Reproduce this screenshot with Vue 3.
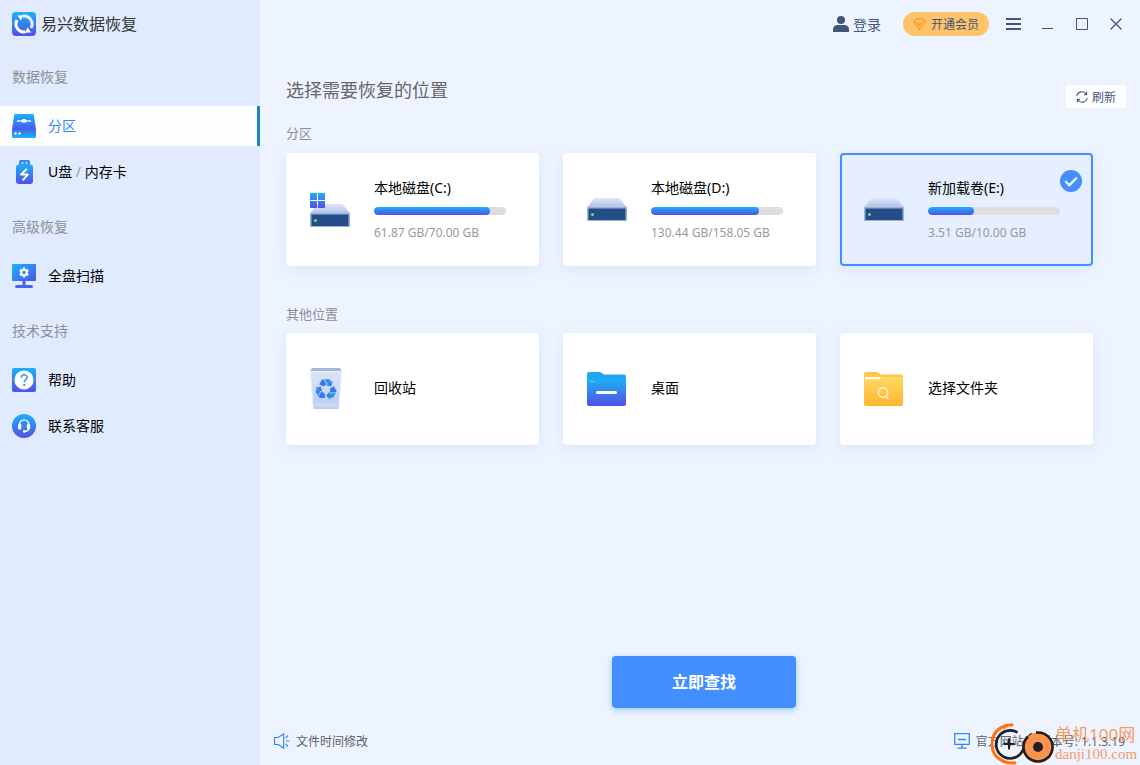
<script setup>
import { ref } from 'vue'

const sections = [
  {
    title: '数据恢复',
    items: [
      { id: 'partition', label: ['分区'] },
      { id: 'usb', label: ['U盘', '内存卡'] },
    ],
  },
  { title: '高级恢复', items: [{ id: 'scan', label: ['全盘扫描'] }] },
  {
    title: '技术支持',
    items: [
      { id: 'help', label: ['帮助'] },
      { id: 'service', label: ['联系客服'] },
    ],
  },
]

const disks = [
  { id: 'c', name: '本地磁盘(C:)', used: 61.87, total: 70, system: true },
  { id: 'd', name: '本地磁盘(D:)', used: 130.44, total: 158.05, system: false },
  { id: 'e', name: '新加载卷(E:)', used: 3.51, total: 10, system: false },
]

const places = [
  { id: 'bin', name: '回收站' },
  { id: 'desktop', name: '桌面' },
  { id: 'folder', name: '选择文件夹' },
]

const activeNav = ref('partition')
const selected = ref('e')
const percent = (d) => Math.floor((d.used / d.total) * 100)
</script>

<template>
  <div class="window">
    <svg class="defs" width="0" height="0" aria-hidden="true">
      <defs>
        <linearGradient id="blue" x1="0" y1="0" x2="0" y2="1">
          <stop offset="0" stop-color="#1cb0f8" />
          <stop offset="1" stop-color="#5350e6" />
        </linearGradient>
        <linearGradient id="blueDiag" x1="0" y1="0" x2="1" y2="1">
          <stop offset="0" stop-color="#14b8fb" />
          <stop offset="1" stop-color="#5350e6" />
        </linearGradient>
        <linearGradient id="drive" x1="0" y1="0" x2="0" y2="1">
          <stop offset="0" stop-color="#18b4fa" />
          <stop offset="0.64" stop-color="#4d5ae8" />
          <stop offset="0.66" stop-color="#3d70ec" />
          <stop offset="1" stop-color="#18b4fa" />
        </linearGradient>
        <linearGradient id="lid" x1="0" y1="0" x2="0" y2="1">
          <stop offset="0" stop-color="#dde6f8" />
          <stop offset="1" stop-color="#afc3e8" />
        </linearGradient>
        <linearGradient id="bin" x1="0" y1="0" x2="0" y2="1">
          <stop offset="0" stop-color="#dbe5f7" />
          <stop offset="1" stop-color="#b9ccee" />
        </linearGradient>
        <linearGradient id="yellow" x1="0" y1="0" x2="0" y2="1">
          <stop offset="0" stop-color="#ffd866" />
          <stop offset="1" stop-color="#ffb52e" />
        </linearGradient>
      </defs>
    </svg>

    <aside class="sidebar">
      <div class="brand">
        <svg width="24" height="24" viewBox="0 0 24 24" aria-hidden="true">
          <rect width="24" height="24" rx="4" fill="url(#blue)" />
          <path d="M10.500 4.200A8 8 0 0 1 19 16" fill="none" stroke="#e3ecff" stroke-width="3" />
          <path d="M13.500 19.800A8 8 0 0 1 5 8" fill="none" stroke="#fff" stroke-width="3" />
          <path d="M5.600 3.400 11.200 3.200 8.800 8.600Z" fill="#fff" />
          <path d="M19.200 20.400 13.200 20.800 15.600 15.200Z" fill="#fff" />
        </svg>
        <span>易兴数据恢复</span>
      </div>
      <nav>
        <section v-for="s in sections" :key="s.title">
          <h2>{{ s.title }}</h2>
          <button
            v-for="item in s.items"
            :key="item.id"
            type="button"
            class="nav-item"
            :class="{ active: activeNav === item.id }"
            @click="activeNav = item.id"
          >
            <svg v-if="item.id === 'partition'" width="24" height="24" viewBox="0 0 24 24" aria-hidden="true">
              <path d="M3.500 0h17a1.400 1.400 0 0 1 1.400 1.200L24 15.500V22.600A1.400 1.400 0 0 1 22.600 24H1.400A1.400 1.400 0 0 1 0 22.600V15.500L2.100 1.200A1.400 1.400 0 0 1 3.500 0Z" fill="url(#drive)" />
              <path d="M5 7h14" stroke="#fff" stroke-width="1.300" />
              <ellipse cx="12" cy="7" rx="2.500" ry="1.900" fill="#fff" />
              <circle cx="3.500" cy="19.500" r="1.200" fill="#fff" />
              <circle cx="7.500" cy="19.500" r="1.200" fill="#fff" />
            </svg>
            <svg v-else-if="item.id === 'usb'" width="24" height="24" viewBox="0 0 24 24" aria-hidden="true">
              <path d="M8.500 0h8A1.500 1.500 0 0 1 18 1.500V5H7V1.500A1.500 1.500 0 0 1 8.500 0Z" fill="#3d88f0" />
              <path d="M9.500 2.200h2v1.600h-2ZM13.500 2.200h2v1.600h-2Z" fill="#dcecff" />
              <rect x="4" y="4.500" width="17" height="19.500" rx="3" fill="url(#blue)" />
              <path d="M14.200 9.600 9 14.400H15.800L11.200 19.800" fill="none" stroke="#fff" stroke-width="2" stroke-linejoin="round" stroke-linecap="round" />
            </svg>
            <svg v-else-if="item.id === 'scan'" width="24" height="24" viewBox="0 0 24 24" aria-hidden="true">
              <rect width="24" height="17" rx="1" fill="url(#blueDiag)" />
              <path d="M10.500 17h3v4h6a1.500 1.500 0 0 1 0 3h-15a1.500 1.500 0 0 1 0-3h6Z" fill="#4a62e8" />
              <circle cx="12" cy="8.500" r="2.700" fill="none" stroke="#fff" stroke-width="2" />
              <path d="M12 3.600v2.200M12 11.200v2.200M7.800 6l1.900 1.100M14.300 9.900l1.900 1.100M7.800 11l1.900-1.100M14.300 7.100 16.200 6" stroke="#fff" stroke-width="2.400" />
            </svg>
            <svg v-else-if="item.id === 'help'" width="24" height="24" viewBox="0 0 24 24" aria-hidden="true">
              <rect width="24" height="24" rx="2" fill="url(#blue)" />
              <circle cx="12" cy="12" r="9.600" fill="#fff" />
              <path d="M9.300 9.700C9.300 5.900 15 5.900 15 9.400 15 11.600 12.200 11.600 12.200 14.400" fill="none" stroke="#2d9cf4" stroke-width="1.600" />
              <circle cx="12.200" cy="17" r="1.100" fill="#3c80ee" />
            </svg>
            <svg v-else width="24" height="24" viewBox="0 0 24 24" aria-hidden="true">
              <circle cx="12" cy="12" r="12" fill="url(#blue)" />
              <path d="M7.500 14V10.500a4.600 4.600 0 0 1 9.200 0V13.500C16.700 16.300 14.800 17.500 12.500 17.500" fill="none" stroke="#fff" stroke-width="1.400" />
              <rect x="6" y="9.700" width="3.300" height="5.800" rx="1.500" fill="#fff" />
              <rect x="14.900" y="9.700" width="3.300" height="5.800" rx="1.500" fill="#fff" />
              <circle cx="12.200" cy="17.400" r="1.300" fill="#fff" />
            </svg>
            <span>
              <template v-for="(part, i) in item.label" :key="part">
                <i v-if="i > 0"> / </i>{{ part }}
              </template>
            </span>
          </button>
        </section>
      </nav>
    </aside>

    <main class="main">
      <header class="topbar">
        <button type="button" class="login">
          <svg width="16" height="16" viewBox="0 0 16 16" aria-hidden="true">
            <circle cx="8" cy="4" r="4" fill="#42567a" />
            <path d="M0 16V13.500A4.500 4.500 0 0 1 4.500 9h7A4.500 4.500 0 0 1 16 13.500V16Z" fill="#42567a" />
          </svg>
          登录
        </button>
        <button type="button" class="vip">
          <svg width="13" height="12" viewBox="0 0 13 12" fill="none" stroke="#fa9a1c" stroke-width="1.200" stroke-linejoin="round" aria-hidden="true">
            <path d="M3.300.8h6.400L12.200 4.200 6.500 11.200.8 4.200ZM3.700 4.400 6.500 7.500 9.300 4.400" />
          </svg>
          开通会员
        </button>
        <button type="button" class="tool menu" aria-label="菜单">
          <svg width="15" height="12" viewBox="0 0 15 12"><path d="M0 1h15M0 6h15M0 11h15" stroke="#42567a" stroke-width="2" /></svg>
        </button>
        <button type="button" class="tool" aria-label="最小化">
          <svg width="12" height="12" viewBox="0 0 12 12"><path d="M0 10.500h11" stroke="#42567a" /></svg>
        </button>
        <button type="button" class="tool" aria-label="最大化">
          <svg width="12" height="12" viewBox="0 0 12 12"><path d="M.5.500h11v11H.5Z" fill="none" stroke="#42567a" /></svg>
        </button>
        <button type="button" class="tool" aria-label="关闭">
          <svg width="12" height="12" viewBox="0 0 12 12"><path d="M.5.500l11 11M11.500.5l-11 11" stroke="#42567a" stroke-width="1.300" /></svg>
        </button>
      </header>

      <div class="heading">
        <h1>选择需要恢复的位置</h1>
        <button type="button" class="refresh">
          <svg width="12" height="12" viewBox="0 0 12 12" fill="none" stroke="#42567a" stroke-width="1.100" aria-hidden="true">
            <path d="M.8 5A5.200 5.200 0 0 1 10.300 3.200M10.600.8V3.700H7.800M11.200 7A5.200 5.200 0 0 1 1.700 8.800M1.400 11.200V8.300H4.200" />
          </svg>
          刷新
        </button>
      </div>

      <section class="group">
        <h2>分区</h2>
        <div class="grid">
          <button
            v-for="d in disks"
            :key="d.id"
            type="button"
            class="card"
            :class="{ selected: selected === d.id }"
            :aria-pressed="selected === d.id"
            @click="selected = d.id"
          >
            <svg
              width="40"
              :height="d.system ? 34 : 23"
              :viewBox="d.system ? '0 12 40 34' : '0 23 40 23'"
              aria-hidden="true"
            >
              <path d="M7.500 23h25L40 32.500H0Z" fill="url(#lid)" />
              <path d="M0 32h40v14H0Z" fill="#9cb4dc" />
              <path d="M1.500 33.500h37v11.500h-37Z" fill="#244d88" />
              <circle cx="5.500" cy="39.500" r="1.500" fill="#6ee07c" />
              <path v-if="d.system" d="M0 12h7v7H0ZM8 12h7v7H8ZM0 20h7v7H0ZM8 20h7v7H8Z" fill="url(#blue)" />
            </svg>
            <span class="info">
              <span class="name">{{ d.name }}</span>
              <span class="track" role="progressbar" :aria-label="d.name" :aria-valuenow="percent(d)" aria-valuemin="0" aria-valuemax="100">
                <span class="fill" :style="{ width: percent(d) + '%' }"></span>
              </span>
              <span class="size">{{ d.used.toFixed(2) }} GB/{{ d.total.toFixed(2) }} GB</span>
            </span>
            <svg v-if="selected === d.id" class="check" width="22" height="22" viewBox="0 0 22 22" aria-hidden="true">
              <circle cx="11" cy="11" r="11" fill="#438fff" />
              <path d="M5.200 11.200 9.300 15.200 17 7.500" fill="none" stroke="#e5efff" stroke-width="2.400" />
            </svg>
          </button>
        </div>
      </section>

      <section class="group">
        <h2>其他位置</h2>
        <div class="grid">
          <button
            v-for="p in places"
            :key="p.id"
            type="button"
            class="card place"
            :class="{ selected: selected === p.id }"
            :aria-pressed="selected === p.id"
            @click="selected = p.id"
          >
            <svg v-if="p.id === 'bin'" width="40" height="42" viewBox="0 0 40 42" aria-hidden="true">
              <path d="M2 0h28l2 3.500H0Z" fill="#a3b8da" />
              <path d="M0 3.500h32L29 41H3Z" fill="url(#bin)" />
              <path d="M.5 3.500 3.500 41M31.500 3.500 28.500 41M0 3.500h32" stroke="#ebf1fc" fill="none" />
              <path d="M5 35h22v4H5.400Z" fill="#c8d7f2" />
              <g transform="translate(16 21.500)">
                <g v-for="angle in [0, 120, 240]" :key="angle" :transform="`rotate(${angle})`">
                  <path d="M-6.800-5.200-4.400-9.200A2.200 2.200 0 0 1-2.600-10.200L.6-5.200-2.800-3Z" fill="#3f78ee" />
                  <path d="M-2-10.200H2.400A2.200 2.200 0 0 1 4.200-9.200L5.200-7.500 7-8.500 5.200-3-.2-4.300 1.700-5.400Z" fill="#2b8df4" />
                </g>
              </g>
            </svg>
            <svg v-else-if="p.id === 'desktop'" width="40" height="42" viewBox="0 0 40 42" aria-hidden="true">
              <path d="M0 6a2 2 0 0 1 2-2H12.500a3 3 0 0 1 1.900.7L17 6.500H37a2 2 0 0 1 2 2V20H0Z" fill="#20a6f4" />
              <path d="M0 11H39V36a2 2 0 0 1-2 2H2a2 2 0 0 1-2-2Z" fill="url(#blue)" />
              <path d="M3 13.500h5" stroke="#6fd0d8" />
              <path d="M10.500 24.500h18" stroke="#fff" stroke-width="3" stroke-linecap="round" />
            </svg>
            <svg v-else width="40" height="42" viewBox="0 0 40 42" aria-hidden="true">
              <path d="M0 6a2 2 0 0 1 2-2H12.500a3 3 0 0 1 1.900.7L17 6.500H37a2 2 0 0 1 2 2V20H0Z" fill="#ffc648" />
              <path d="M1 9h17l-3.500 2.500H1Z" fill="#fff" />
              <path d="M0 11.500H14L18 9H39V36a2 2 0 0 1-2 2H2a2 2 0 0 1-2-2Z" fill="url(#yellow)" />
              <circle cx="19" cy="24.500" r="4.700" fill="none" stroke="#fff6df" stroke-width="1.400" />
              <path d="M21.500 27.700 24.500 31" stroke="#fff6df" stroke-width="1.500" />
            </svg>
            <span class="info"><span class="name">{{ p.name }}</span></span>
          </button>
        </div>
      </section>

      <div class="action">
        <button type="button" class="start">立即查找</button>
      </div>

      <footer class="footer">
        <a href="#" class="notice">
          <svg width="16" height="16" viewBox="0 0 16 16" fill="none" stroke="#3385fa" stroke-width="1.200" aria-hidden="true">
            <path d="M.6 4.500H4.200L9.700.8V15.200L4.200 11.500H.6ZM11.700 5.200 14 2.500M12 8h3.500M11.700 10.800 14 13.500" />
          </svg>
          文件时间修改
        </a>
        <a href="#" class="site">
          <svg width="16" height="16" viewBox="0 0 16 16" fill="none" stroke="#3385fa" stroke-width="1.300" aria-hidden="true">
            <path d="M.7.700h14.600v10.600H.7ZM8 11.500V15M3.500 15.200h9M4 6.500h8" />
          </svg>
          官方网站
        </a>
        <span class="version">版本号: 1.1.3.19</span>
      </footer>
    </main>

    <div class="stamp">
      <svg width="64" height="42" viewBox="0 0 64 42" fill="none" aria-hidden="true">
        <path d="M21 2C12 1 1 8 1 21S12 41 24 40M13 4.500C17 2 19 1.500 21 2" stroke="#ff7314" stroke-width="3" stroke-linecap="round" />
        <path d="M26.500 9.500A14 14 0 1 0 32 27C35 22 34 15 41 11" stroke="#231f20" stroke-width="2.600" />
        <path d="M12.500 21h11M18 15.500v11" stroke="#231f20" stroke-width="2" />
        <circle cx="47" cy="24" r="14.500" fill="#fb924e" />
        <path d="M45 9.600A14.500 14.500 0 1 1 37 13.500" stroke="#231f20" stroke-width="2.600" />
        <circle cx="47" cy="24" r="5" fill="#231f20" />
      </svg>
      <div class="stamp-text">
        <span>单机100网</span>
        <span class="stamp-url">danji100.com</span>
      </div>
    </div>
  </div>
</template>

<style>
body {
  margin: 0;
  background: #edf4ff;
}
</style>

<style scoped>
.window {
  position: relative;
  display: flex;
  min-height: 100vh;
  background: #edf4ff;
  font-family: "Noto Sans", "Noto Sans CJK SC", sans-serif;
  color: #000;
  overflow: hidden;
}
.defs {
  position: absolute;
}
button {
  margin: 0;
  padding: 0;
  border: 0;
  background: none;
  font: inherit;
  color: inherit;
  text-align: left;
  cursor: pointer;
}
a {
  color: inherit;
  text-decoration: none;
}
h1,
h2 {
  margin: 0;
  font-weight: 400;
}
svg {
  flex: none;
  display: block;
}

.sidebar {
  flex: none;
  width: 260px;
  background: #e0ebff;
}
.brand {
  display: flex;
  align-items: center;
  gap: 5px;
  height: 24px;
  padding: 12px 12px 6px;
  font-size: 16px;
  color: #333;
}
.brand span,
.nav-item span {
  padding-bottom: 2px;
}
.sidebar h2 {
  padding: 25px 12px 19px;
  font-size: 14px;
  line-height: 20px;
  color: #8c8f96;
}
.nav-item {
  display: flex;
  align-items: center;
  gap: 12px;
  box-sizing: border-box;
  width: 100%;
  height: 40px;
  padding-left: 12px;
  border-right: 3px solid transparent;
  font-size: 14px;
}
.nav-item + .nav-item {
  margin-top: 6px;
}
.nav-item.active {
  border-right-color: #1b85c6;
  background: #fdfdfd;
  color: #2f88ff;
}
.nav-item i {
  font-style: normal;
  color: #999;
}

.main {
  flex: 1;
  min-width: 0;
  display: flex;
  flex-direction: column;
}
.topbar {
  display: flex;
  align-items: center;
  justify-content: flex-end;
  height: 48px;
  padding-right: 18px;
  color: #42567a;
}
.login {
  display: flex;
  align-items: center;
  gap: 4px;
  margin-right: 22px;
  font-size: 14px;
}
.vip {
  display: flex;
  align-items: center;
  gap: 5px;
  height: 24px;
  padding: 0 10px;
  border-radius: 12px;
  background: #ffc369;
  font-size: 12px;
}
.tool {
  margin-left: 22px;
}
.tool.menu {
  margin: 0 -1px 0 17px;
}

.heading {
  display: flex;
  align-items: center;
  justify-content: space-between;
  height: 24px;
  padding: 30px 14px 0 26px;
}
.heading h1 {
  font-size: 18px;
  line-height: 24px;
  color: #666;
}
.refresh {
  display: flex;
  flex: none;
  align-items: center;
  gap: 4px;
  height: 23px;
  margin-top: 13px;
  padding: 0 10px;
  border-radius: 3px;
  background: #fff;
  font-size: 12px;
  color: #42567a;
}

.group {
  padding: 21px 47px 0 26px;
}
.group + .group {
  padding-top: 38px;
}
.group h2 {
  margin-bottom: 10px;
  font-size: 13px;
  line-height: 20px;
  color: #8c8f96;
}
.group + .group h2 {
  margin-bottom: 9px;
}
.grid {
  display: grid;
  grid-template-columns: repeat(3, 1fr);
  gap: 24px;
}
.card {
  position: relative;
  display: flex;
  align-items: center;
  gap: 24px;
  box-sizing: border-box;
  min-height: 113px;
  padding: 0 22px;
  border: 2px solid transparent;
  border-radius: 4px;
  background: #fff;
  box-shadow: 0 3px 14px rgba(90, 140, 190, 0.14);
}
.card.place {
  min-height: 112px;
}
.place .info {
  padding-bottom: 2px;
}
.card.selected {
  border-color: #438fff;
  background: #e5efff;
}
.info {
  display: flex;
  flex: 1;
  flex-direction: column;
  max-width: 132px;
}
.name {
  font-size: 14px;
  line-height: 18px;
  white-space: nowrap;
}
.track {
  height: 8px;
  margin: 10px 0;
  border-radius: 4px;
  background: #dedede;
  overflow: hidden;
}
.fill {
  display: block;
  height: 8px;
  border-radius: 4px;
  background: linear-gradient(#1cb0f8, #5350e6);
}
.size {
  font-size: 12px;
  line-height: 16px;
  color: #999;
  white-space: nowrap;
}
.check {
  position: absolute;
  top: 15px;
  right: 9px;
}

.action {
  display: flex;
  flex: 1;
  align-items: flex-end;
  justify-content: center;
  padding: 24px 0 9px 8px;
}
.start {
  box-sizing: border-box;
  width: 184px;
  height: 52px;
  padding-bottom: 2px;
  border-radius: 4px;
  background: #438fff;
  box-shadow: 0 2px 6px rgba(60, 150, 230, 0.45);
  color: #fff;
  font-size: 16px;
  font-weight: 700;
  text-align: center;
}
.footer {
  display: flex;
  align-items: center;
  height: 48px;
  padding: 0 15px 0 14px;
  font-size: 12px;
  color: #5c5f66;
}
.notice,
.site {
  display: flex;
  align-items: center;
  gap: 6px;
}
.site {
  margin-left: auto;
}
.version {
  margin-left: 15px;
}

.stamp {
  position: absolute;
  right: 3px;
  bottom: 0;
  display: flex;
  align-items: center;
  pointer-events: none;
}
.stamp-text {
  display: flex;
  flex-direction: column;
  width: 82px;
  font-size: 17px;
  line-height: 20px;
  color: rgba(251, 136, 66, 0.85);
  white-space: nowrap;
}
.stamp-url {
  font-family: "Liberation Serif", serif;
  font-size: 15px;
  line-height: 18px;
}
</style>
